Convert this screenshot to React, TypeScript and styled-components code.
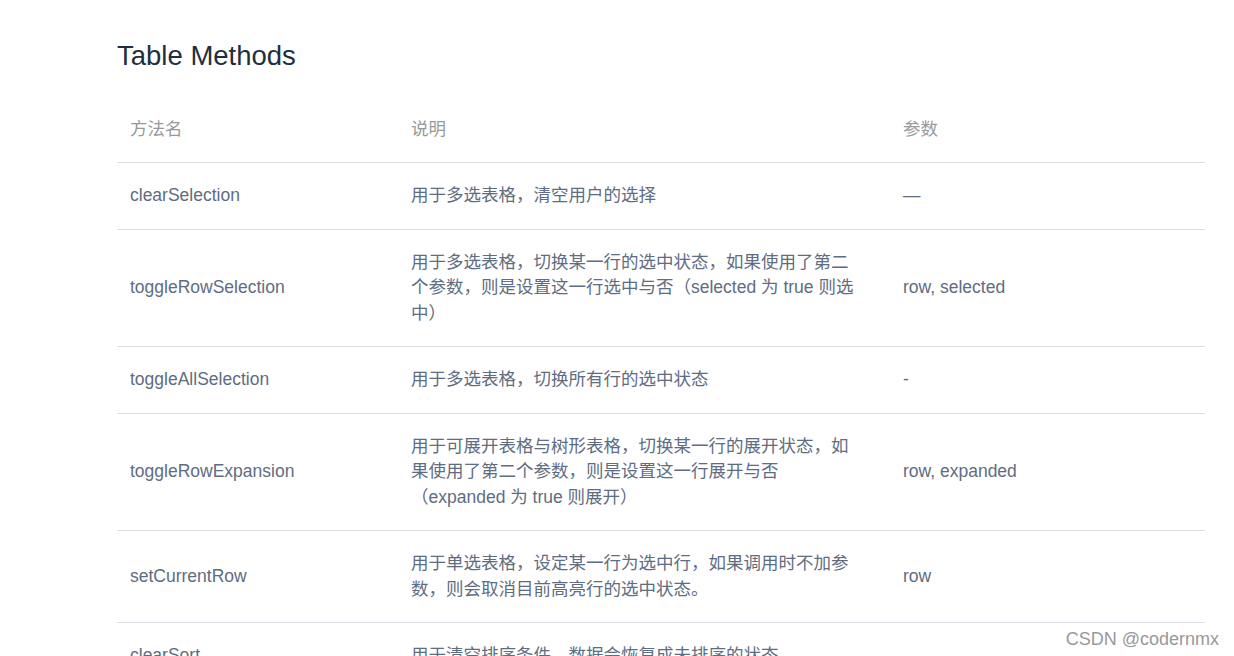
import React from "react";
import styled, { createGlobalStyle } from "styled-components";

const G = createGlobalStyle`
  body { margin: 0; background: #fff; font-family: "Liberation Sans", "Noto Sans CJK SC", sans-serif; overflow: hidden; }
  *, *::before, *::after { box-sizing: border-box; }
`;
const Page = styled.div`padding: 36px 29px 0 117px; position: relative; height: 656px;`;
const Title = styled.h3`margin: 0 0 21px; font-size: 27.5px; font-weight: 400; color: #1f2f3d; line-height: 40px;`;
const Table = styled.table`width: 1088px; border-collapse: collapse; font-size: 17.5px; table-layout: fixed;`;
const Th = styled.th<{ w: number }>`
  width: ${p => p.w}px; text-align: left; font-weight: 400; color: #999; padding: 20px 13px; line-height: 25px; border-bottom: 1px solid #dcdfe6;
`;
const Td = styled.td<{ pr?: number }>`
  color: #5e6d82; padding: 20px ${p => p.pr ?? 13}px 20px 13px; line-height: 25.5px; border-bottom: 1px solid #dcdfe6; vertical-align: middle;
`;
const Mark = styled.div`position: absolute; right: 15px; bottom: 6px; color: #999; font-size: 18px;`;

const rows = [
  ["clearSelection", "用于多选表格，清空用户的选择", "—"],
  ["toggleRowSelection", "用于多选表格，切换某一行的选中状态，如果使用了第二个参数，则是设置这一行选中与否（selected 为 true 则选中）", "row, selected"],
  ["toggleAllSelection", "用于多选表格，切换所有行的选中状态", "-"],
  ["toggleRowExpansion", "用于可展开表格与树形表格，切换某一行的展开状态，如果使用了第二个参数，则是设置这一行展开与否（expanded 为 true 则展开）", "row, expanded"],
  ["setCurrentRow", "用于单选表格，设定某一行为选中行，如果调用时不加参数，则会取消目前高亮行的选中状态。", "row"],
  ["clearSort", "用于清空排序条件，数据会恢复成未排序的状态", "—"],
];

export default function App() {
  return (
    <Page>
      <G />
      <Title>Table Methods</Title>
      <Table>
        <thead>
          <tr><Th w={281}>方法名</Th><Th w={492}>说明</Th><Th w={315}>参数</Th></tr>
        </thead>
        <tbody>
          {rows.map(r => (
            <tr key={r[0]}><Td>{r[0]}</Td><Td pr={36}>{r[1]}</Td><Td>{r[2]}</Td></tr>
          ))}
        </tbody>
      </Table>
      <Mark>CSDN @codernmx</Mark>
    </Page>
  );
}
